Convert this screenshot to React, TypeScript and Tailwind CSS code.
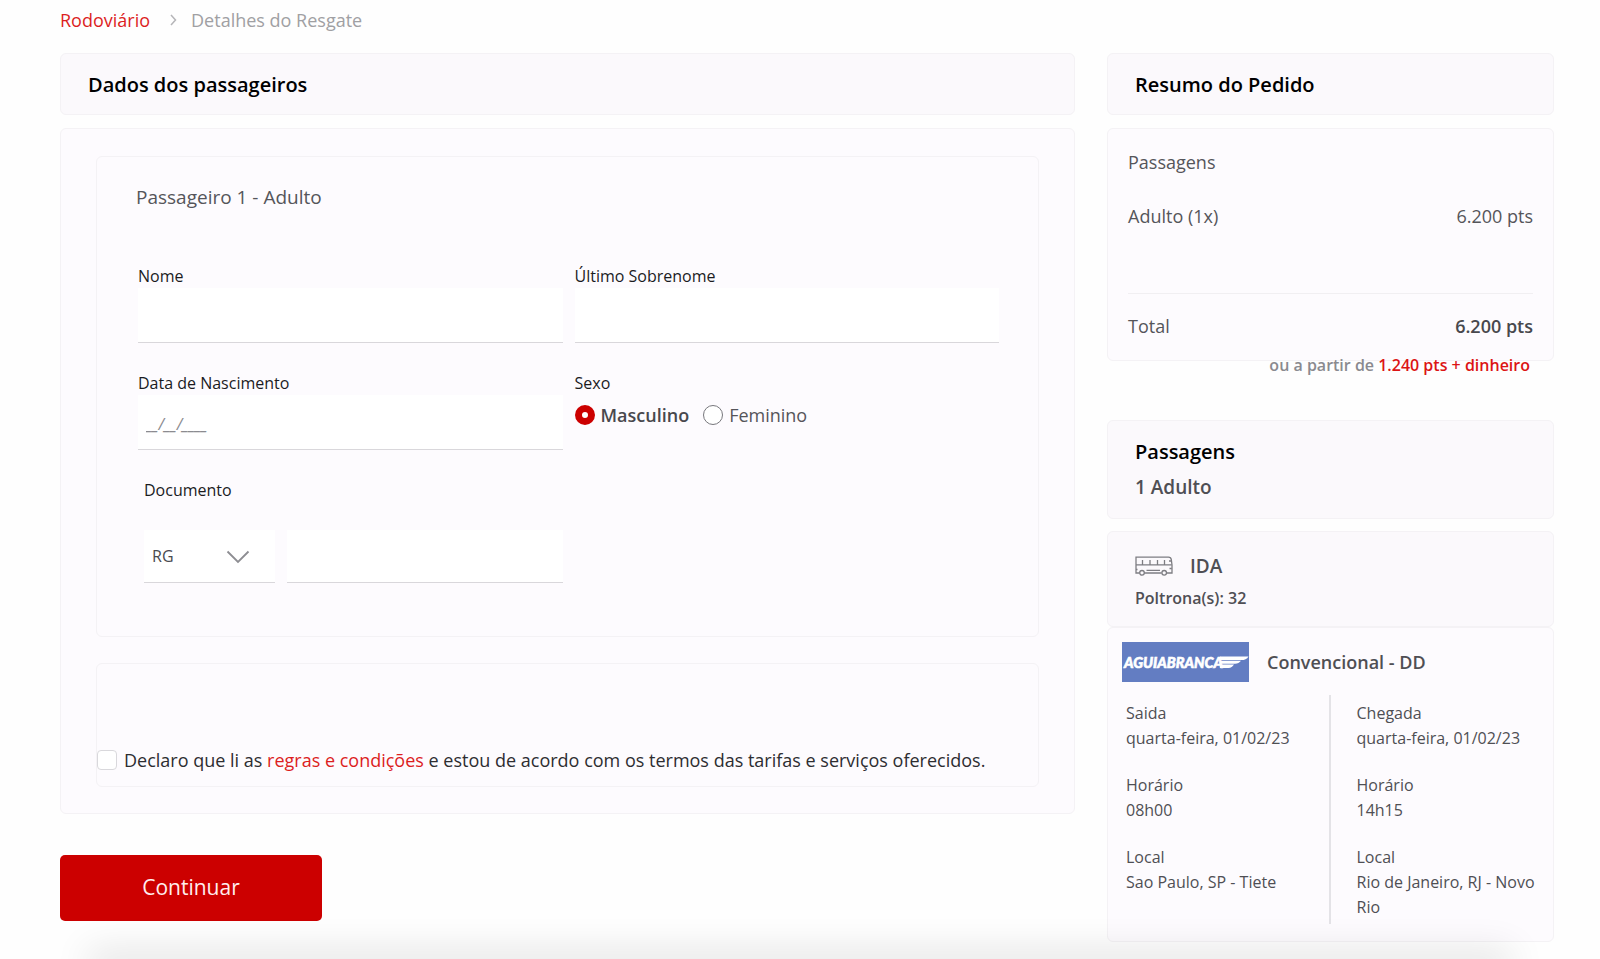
import { Fragment, useState } from "react";
import type { ReactNode } from "react";

const card = "rounded-md border border-[#f4f2f5]";
const label = "block text-base leading-6 text-[#1b1b1f]";
const field =
  "block w-full border-b border-[#d9d7db] bg-white px-2 text-base text-[#4a4a4f] outline-none focus:border-[#cc0000]";

function Heading({ children }: { children: ReactNode }) {
  return (
    <header className={`${card} bg-[#fbf9fc] px-[27px] pt-[17px] pb-[15px]`}>
      <h2 className="text-xl leading-7 font-semibold text-black">{children}</h2>
    </header>
  );
}

function BusIcon() {
  return (
    <svg width="38" height="20" viewBox="0 0 38 20" fill="none" stroke="#7d7d82" strokeWidth="1.3" aria-hidden="true">
      <path d="M4.5 17H1V1.2h32.500c1.600 0 2.600 1 2.800 2.500L37 9v8h-5.200M9.200 17h17.400" />
      <path d="M1 8.800h35.800M7.500 4v4.800M15 4v4.800M22.500 4v4.800M29.500 4v4.800M11.500 14.300h13.500M34 5h2.500M34.500 12.500h2.300M1 13.500h1.500" />
      <circle cx="7" cy="16.800" r="2.300" />
      <circle cx="29.200" cy="16.800" r="2.300" />
    </svg>
  );
}

function CompanyLogo() {
  return (
    <svg width="127" height="40" viewBox="0 0 127 40" role="img" aria-label="Aguia Branca" className="shrink-0">
      <rect width="127" height="40" fill="#637dc2" />
      <text
        x="2"
        y="26"
        fill="#fff"
        stroke="#fff"
        strokeWidth="0.6"
        fontFamily="Lato, sans-serif"
        fontSize="14.5"
        fontWeight="900"
        fontStyle="italic"
      >
        AGUIABRANCA
      </text>
      <path d="M98 14.500h28.500c-1.500 2.600-4 3.600-7 3.600H98zM98 18.800h21c-1.500 2-3.500 3-6 3H98zM98 22.500h14c-1.500 2.300-3 3.500-5.500 3.500H98z" fill="#fff" />
    </svg>
  );
}

type Stop = { title: string; place: string; time: string };

function StopDetails({ title, place, time }: Stop) {
  const rows = [
    [title, "quarta-feira, 01/02/23"],
    ["Horário", time],
    ["Local", place],
  ];
  return (
    <dl className="text-base leading-[25px] text-[#4f4f54]">
      {rows.map(([term, value]) => (
        <Fragment key={term}>
          <dt>{term}</dt>
          <dd className="mb-[22px] last:mb-0">{value}</dd>
        </Fragment>
      ))}
    </dl>
  );
}

function PassengerForm() {
  const [sex, setSex] = useState("Masculino");
  return (
    <fieldset className={`${card} min-w-0 px-[39px] pt-[26px] pb-[53px]`}>
      <h3 className="text-[19px] leading-7 text-[#55555a]">Passageiro 1 - Adulto</h3>
      <div className="mt-[53px] grid grid-cols-1 gap-x-3 gap-y-7 pl-0.5 sm:grid-cols-2">
        <div>
          <label htmlFor="nome" className={label}>Nome</label>
          <input id="nome" type="text" className={`${field} h-[55px]`} />
        </div>
        <div>
          <label htmlFor="sobrenome" className={label}>Último Sobrenome</label>
          <input id="sobrenome" type="text" className={`${field} h-[55px]`} />
        </div>
        <div>
          <label htmlFor="nascimento" className={label}>Data de Nascimento</label>
          <input
            id="nascimento"
            type="text"
            placeholder="__/__/____"
            className={`${field} h-[55px] pt-1 placeholder:text-[#8b8b90] placeholder:italic`}
          />
        </div>
        <div role="radiogroup" aria-labelledby="sexo">
          <span id="sexo" className={label}>Sexo</span>
          <div className="mt-1.5 flex flex-wrap gap-x-3.5">
            {["Masculino", "Feminino"].map((option) => (
              <label
                key={option}
                className="flex items-center gap-1.5 text-lg leading-7 text-[#55555a] has-checked:font-semibold has-checked:text-[#48484d]"
              >
                <input
                  type="radio"
                  name="sexo"
                  value={option}
                  checked={sex === option}
                  onChange={() => setSex(option)}
                  className="size-5 appearance-none rounded-full border border-[#77777c] bg-white checked:border-[7px] checked:border-[#cc0000]"
                />
                {option}
              </label>
            ))}
          </div>
        </div>
        <div className="pl-1.5">
          <label htmlFor="documento" className={label}>Documento</label>
          <div className="mt-7 flex gap-3">
            <div className="relative w-[131px] shrink-0">
              <select
                aria-label="Tipo de documento"
                className={`${field} h-[53px] appearance-none`}
              >
                <option>RG</option>
                <option>CPF</option>
              </select>
              <svg
                className="pointer-events-none absolute top-5 right-[25px]"
                width="24"
                height="14"
                viewBox="0 0 24 14"
                fill="none"
                stroke="#8d8d92"
                strokeWidth="1.800"
                aria-hidden="true"
              >
                <path d="M1.500 1.500 12 12 22.500 1.500" />
              </svg>
            </div>
            <input id="documento" type="text" className={`${field} h-[53px] min-w-0`} />
          </div>
        </div>
      </div>
    </fieldset>
  );
}

function OrderSummary() {
  return (
    <section>
      <Heading>Resumo do Pedido</Heading>
      <div className={`${card} mt-[13px] bg-[#fdfbfe] px-5 pt-[19px] pb-5 text-lg leading-7 text-[#55555a]`}>
        <h3>Passagens</h3>
        <p className="mt-[26px] flex justify-between">
          <span>Adulto (1x)</span>
          <span>6.200 pts</span>
        </p>
        <p className="mt-[63px] flex justify-between border-t border-[#f1eff2] pt-[18px]">
          <span>Total</span>
          <strong className="font-semibold text-[#48484d]">6.200 pts</strong>
        </p>
      </div>
      <p className="relative -mt-2 pr-6 text-right text-base leading-6 font-semibold text-[#8a8a8f]">
        ou a partir de <span className="text-[#dc1414]">1.240 pts + dinheiro</span>
      </p>
    </section>
  );
}

function Trip() {
  return (
    <section className="mt-[43px]">
      <header className={`${card} bg-[#fbf9fc] px-[27px] py-[17px] font-semibold`}>
        <h2 className="text-xl leading-7 text-black">Passagens</h2>
        <p className="mt-[7px] text-[19px] leading-7 text-[#4f4f54]">1 Adulto</p>
      </header>
      <div className={`${card} mt-3 bg-[#fbf9fc] px-[27px] pt-5 pb-4 font-semibold text-[#4f4f54]`}>
        <h3 className="flex items-center gap-[17px] text-[19px] leading-7">
          <BusIcon />
          IDA
        </h3>
        <p className="mt-1.5 text-base leading-6">Poltrona(s): 32</p>
      </div>
      <div className={`${card} bg-[#fdfbfe] px-3.5 pt-3.5 pb-[17px]`}>
        <div className="flex items-center gap-[18px]">
          <CompanyLogo />
          <h4 className="text-lg leading-7 font-semibold text-[#4f4f54]">Convencional - DD</h4>
        </div>
        <div className="mt-[13px] grid grid-cols-2">
          <div className="border-r-2 border-[#e4e3e7] pt-1.5 pb-1 pl-1">
            <StopDetails title="Saida" time="08h00" place="Sao Paulo, SP - Tiete" />
          </div>
          <div className="pt-1.5 pb-1 pl-[26px]">
            <StopDetails title="Chegada" time="14h15" place="Rio de Janeiro, RJ - Novo Rio" />
          </div>
        </div>
      </div>
    </section>
  );
}

export default function App() {
  return (
    <div className="relative min-h-screen overflow-hidden bg-[#fefefe] pr-[46px] pb-4 pl-[60px] font-['Open_Sans',sans-serif]">
      <nav aria-label="Navegação" className="flex items-center pt-1.5 text-lg leading-7">
        <a href="#rodoviario" className="text-[#dc1e1e]">Rodoviário</a>
        <svg className="mr-3.5 ml-5" width="7" height="12" viewBox="0 0 7 12" fill="none" stroke="#b5b5b8" strokeWidth="1.500" aria-hidden="true">
          <path d="M1 1l4.500 5L1 11" />
        </svg>
        <span className="text-[#a0a0a3]">Detalhes do Resgate</span>
      </nav>

      <div className="mt-[19px] grid grid-cols-1 gap-8 lg:grid-cols-[minmax(0,1fr)_447px]">
        <main>
          <Heading>Dados dos passageiros</Heading>
          <form onSubmit={(event) => event.preventDefault()}>
            <div className={`${card} mt-[13px] bg-[#fdfbfe] px-[35px] pt-[27px] pb-[26px]`}>
              <PassengerForm />
              <div className={`${card} mt-[26px] pt-[82px] pb-3`}>
                <div className="flex items-center gap-[7px] text-lg leading-7 text-[#2d2d31]">
                  <input
                    id="aceite"
                    type="checkbox"
                    className="size-5 shrink-0 appearance-none rounded-sm border border-[#d9d8dc] bg-white checked:bg-[#cc0000]"
                  />
                  <label htmlFor="aceite">
                    Declaro que li as{" "}
                    <a href="#regras" className="text-[#dc1e1e]">regras e condições</a>{" "}
                    e estou de acordo com os termos das tarifas e serviços oferecidos.
                  </label>
                </div>
              </div>
            </div>
            <button type="submit" className="mt-[41px] h-[66px] w-[262px] rounded-[5px] bg-[#cc0000] text-[21px] text-[#ffeeee]">
              Continuar
            </button>
          </form>
        </main>
        <aside>
          <OrderSummary />
          <Trip />
        </aside>
      </div>
      <div className="pointer-events-none absolute inset-x-24 -bottom-2 h-2 shadow-[0_0_36px_8px_rgba(0,0,0,0.12)]" />
    </div>
  );
}
